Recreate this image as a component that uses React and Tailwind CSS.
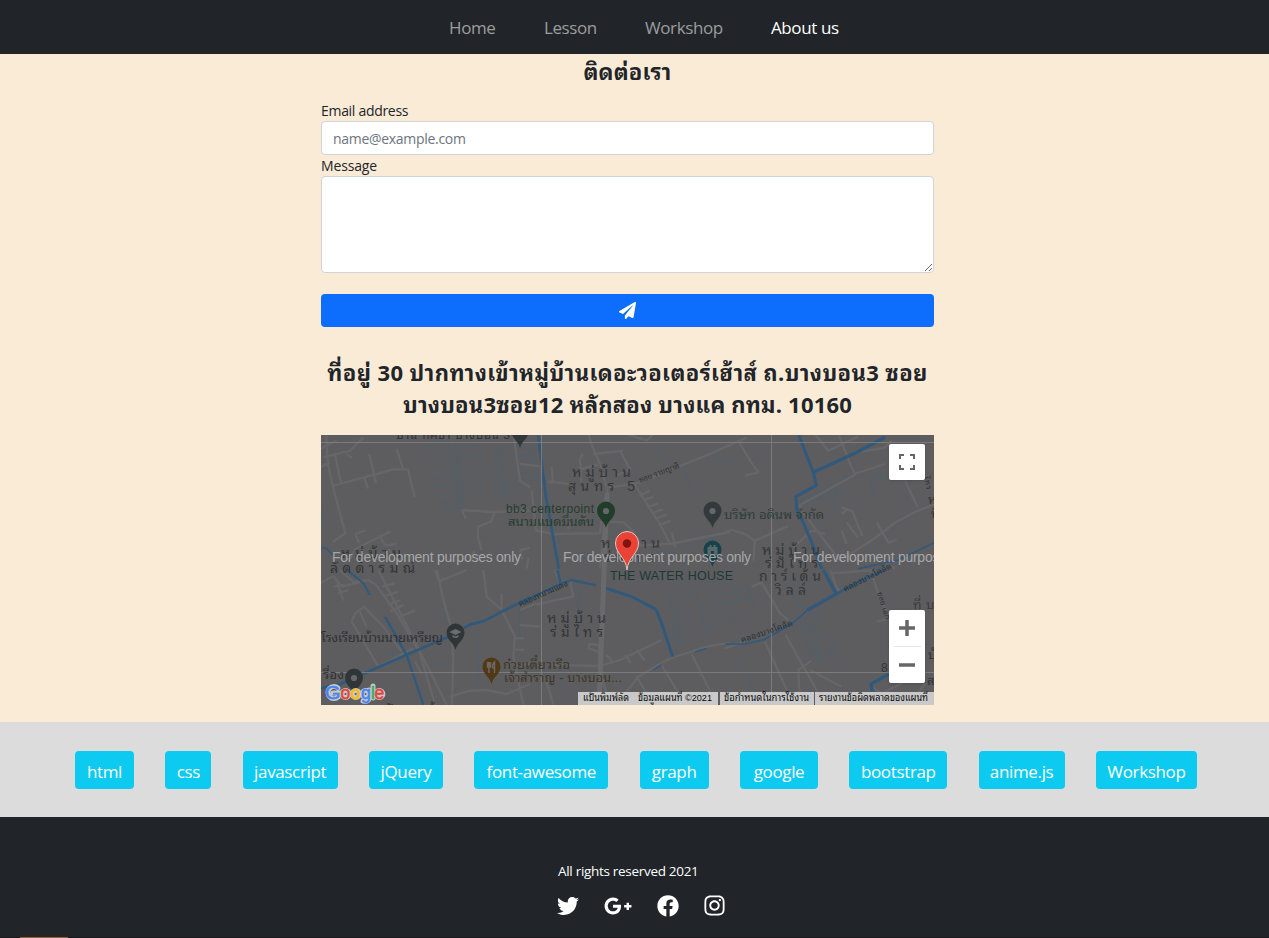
import { FaPaperPlane, FaTwitter, FaGooglePlusG, FaFacebook, FaInstagram } from "react-icons/fa";

const nav = [
  ["Home", "w-[46px] text-[#9b9d9e]"],
  ["Lesson", "w-[52px] text-[#9b9d9e]"],
  ["Workshop", "w-[77px] text-[#9b9d9e]"],
  ["About us", "w-[69px] text-white"],
];

const tags = [
  ["html", "w-[59px]"],
  ["css", "w-[46px]"],
  ["javascript", "w-[95px]"],
  ["jQuery", "w-[74px]"],
  ["font-awesome", "w-[134px]"],
  ["graph", "w-[69px]"],
  ["google", "w-[78px]"],
  ["bootstrap", "w-[98px]"],
  ["anime.js", "w-[86px]"],
  ["Workshop", "w-[101px]"],
];

/* Each tile is drawn in its own 3x coordinate space. */
const tiles = [
  {
    at: "translate(-1 -1) scale(.33333)",
    roads: [
      "M18 0 L24 90 L10 92 M24 90 L38 156 L76 298 L38 324 M38 156 L220 106 L264 106 L284 190 M44 60 L64 150 M148 60 L168 148 M132 130 L144 164 M230 44 L248 102",
      "M10 70 L90 50 L130 10 M0 100 L30 85 M80 60 L96 72 M90 375 L105 345 L210 293 M105 300 L118 328 M105 300 L135 290 M178 303 L195 335 M195 335 L230 330 M205 345 L240 385 M0 45 L50 20",
      "M425 228 L520 234 L630 230 M425 228 L438 254 M524 234 L514 262 L474 278 L474 310 L484 348 M600 348 L630 342 M600 348 L607 376 M455 376 L462 350 M580 0 L600 140 L630 160",
    ],
    canals: [
      "M318 34 L380 28 M326 62 L386 52 M325 84 L392 75 M330 110 L396 98 M334 136 L402 122 M334 160 L402 145 M345 185 L410 170 M350 210 L415 196 M350 236 L424 224",
      "M408 44 L480 34 M414 72 L496 58 M414 102 L490 84 M414 130 L488 110 M418 158 L492 140 M422 186 L494 164 M386 20 L424 220 M404 24 L430 222",
      "M545 30 L550 54 L540 62 L562 198 M512 50 L548 46 M510 75 L548 72 M515 96 L552 92 M518 120 L555 116 M521 145 L558 138 M523 168 L560 162 M523 190 L585 182 M560 40 L630 42 M565 70 L630 60 M570 100 L630 90 M570 125 L620 117 M585 150 L560 155",
      "M72 150 L76 164 M5 230 L10 258 M480 234 L482 248",
    ],
    water: [["M0 342 L18 342 L48 372", 4]],
  },
  {
    at: "translate(199 -1) scale(.33333)",
    roads: [
      "M0 90 L70 98 M205 0 L218 40 L240 90 L262 170 L240 404",
      "M262 160 L330 152 L360 146 L500 88 L575 58 L630 32 M95 98 L98 140 L88 150 M82 142 L150 150 M188 60 L180 75 L184 145 M184 105 L235 92 M320 0 L380 20 L400 0 M220 60 L310 50 M300 50 L330 105 L290 125 M35 170 L48 290 L100 300 L240 298 L244 262 L310 265 L338 290 L360 330",
      "M336 140 L420 270 L450 330 M360 185 L390 170 M370 200 L400 188 M382 220 L415 208 M394 238 L430 225 M405 255 L440 242 M416 275 L452 260 M340 335 L450 330 L630 294 M455 295 L466 340 M25 370 L20 404 M145 230 L145 285",
    ],
    canals: [
      "M0 40 L45 44 M0 70 L40 66 M5 95 L50 85 M5 115 L50 108 M5 140 L54 132 M28 0 L62 210 M72 160 L100 210 L80 215 M100 300 L105 360 M118 306 L112 404 M488 90 L510 164 M410 35 L440 85 M578 60 L592 92 L630 76 M285 70 L305 98 M390 360 L480 350 L610 300 M160 370 L190 355 L205 390",
    ],
    water: [["M54 0 L78 190 L116 404", 8]],
  },
  {
    at: "translate(404 -1) scale(.33333)",
    roads: [
      "M0 40 L65 10 M40 20 L75 80 L100 115 L60 125 M0 294 L20 288 L60 300 L90 320 L190 276 M90 320 L85 380 M270 0 L310 50 L400 8 M342 5 L372 80 L390 122 L224 214 L230 230 L345 380 L450 312 L510 266 L570 234 L630 210 M372 66 L404 53 L478 42 L500 20",
      "M350 220 L382 232 L412 306 M350 240 L365 228 M350 290 L365 330 M365 265 L398 310 M455 265 L490 326 L515 318 M388 120 L480 90 M540 140 L578 220 M455 370 L510 404 M205 340 L260 290 L300 300",
    ],
    canals: [
      "M80 35 L95 65 M220 204 L310 158 L385 120 M226 216 L335 165 M310 185 L335 230 L360 220 M328 170 L350 206 M320 190 L355 170 L380 200 M430 140 L445 178 L470 120 L440 130 L430 110 M455 105 L480 140 M525 190 L570 170 M550 235 L580 200 M520 275 L525 250 M250 275 L280 260 L292 290 L265 300 Z M430 345 L445 375 M465 310 L475 340",
    ],
    water: [
      ["M220 0 L265 115 L274 154 L212 188 L216 226", 9],
      ["M265 115 L390 58 L480 10", 10],
      ["M216 226 L234 264 L262 330 L290 404", 9],
      ["M400 404 L520 378 L630 325", 5],
    ],
  },
  {
    at: "translate(-1 135) scale(.33333)",
    roads: [
      "M0 40 L40 18 L66 50 L145 30 L168 45 L230 130 L300 250 L345 404 M60 0 L100 35 L150 30 M52 40 L70 92 M40 50 L75 45 M55 70 L85 60 M175 0 L290 225 L380 404 M185 50 L225 40 M195 78 L235 65 M205 104 L242 90 M210 125 L250 105 M240 140 L285 122",
      "M350 0 L358 34 L440 0 M345 0 L358 34 L370 90 L390 160 L400 260 L396 404 M95 155 L105 130 L132 110 L190 170 L245 245 M95 155 L175 290 L280 235 M120 125 L140 170 M490 0 L500 80 L545 120 L545 72 M545 120 L585 200 L580 260 L610 404 M390 380 L450 362 L500 360 L560 372 L630 342 M285 275 L305 312 M580 205 L612 205 M580 238 L612 240 M590 290 L630 280",
    ],
    canals: [
      "M368 100 L380 118 M375 110 L385 165 M476 165 L474 345 M345 275 L355 290 L385 280 M600 110 L600 200 M195 250 L240 260 M555 60 L545 80",
    ],
    water: [
      ["M82 0 L130 40 L150 75", 6],
      ["M195 140 L260 255 L310 404", 7],
      ["M0 356 L60 342 L175 292 L260 254 L375 205 L450 164 L490 154 L540 128 L630 82", 8],
    ],
  },
  {
    at: "translate(199 135) scale(.33333)",
    roads: [
      "M50 104 L110 90 L160 80 L150 30 M105 0 L120 40 M0 120 L50 100 M210 222 L240 225 L235 245 L205 235 Z M95 285 L240 288 L300 270 L425 210 M260 254 L280 280 M316 254 L332 280 M350 240 L375 272 M290 404 L355 320 L430 275 L460 262 L560 230 L630 218 M245 322 L270 404 M350 318 L398 404 M425 285 L485 385 M515 252 L590 404 M75 320 L100 404 M0 165 L60 170",
    ],
    canals: [
      "M450 85 L475 242 M450 92 L520 70 L570 50 L630 32 M460 118 L500 104 M460 142 L510 128 M465 165 L515 150 M462 190 L512 175 M444 186 L480 178 M445 208 L485 198 M478 220 L520 205 M530 70 L560 200 M545 92 L615 70 M548 120 L620 98 M552 145 L625 125 M556 170 L630 155 M475 45 L510 35 M155 40 L180 140 M180 40 L180 120 M110 300 L160 290 M125 310 L140 380 M60 270 L80 340 M315 40 L318 62",
    ],
    water: [
      ["M0 102 L55 72 L120 42 L155 30 L228 46", 7],
      ["M112 0 L122 42", 8],
      ["M244 50 L335 80 L408 118", 9],
      ["M408 118 L425 160 L458 260", 9],
      ["M400 300 L425 284 M525 246 L560 235", 4],
    ],
  },
  {
    at: "translate(404 135) scale(.33333)",
    roads: [
      "M80 50 L110 38 L135 80 L165 130 L190 150 M315 0 L335 52 L345 65 M320 10 L450 0 M435 0 L450 40 L465 90 L490 130 L480 150 L455 155 M120 215 L205 404 M182 195 L235 290 L300 404 M225 404 L220 300 L260 272 M255 300 L350 350 M0 235 L70 210 M440 350 L470 370 L540 335 M560 400 L600 340",
    ],
    canals: [
      "M190 60 L250 130 L290 275 M200 70 L240 55 M215 95 L245 80 M225 150 L285 130 M232 175 L290 155 M240 195 L305 178 M245 220 L310 200 M260 250 L325 230 L350 270 M225 145 L260 270 M260 270 L325 250 M0 70 L50 60 M0 100 L75 80 M0 130 L35 120 M0 155 L45 140 M40 258 L85 360 M65 40 L85 105 L75 120 M560 230 L600 190",
    ],
    water: [
      ["M295 0 L334 72 L248 120", 10],
      ["M334 72 L400 35 L480 0", 7],
      ["M248 120 L205 158 L120 208 L60 222 L0 222", 5],
      ["M442 365 L438 342 L495 310", 10],
    ],
  },
];

/* text, x, baseline, length, size, colour, rotation */
const labels = [
  ["บ้าน ทิศธา บางบอน 3", 75, 4, 114, 12, "#303436", 0],
  ["หมู่บ้าน", 251, 42, 59, 14.5, "#353738", 0],
  ["สุนทร 5", 247, 56, 67, 14, "#353738", 0],
  ["ซอย รามญาติ", 319, 48, 43, 8, "#343434", -21],
  ["bb3 centerpoint", 185, 78, 88, 12, "#263c2e", 0],
  ["สนามแบดมินตัน", 187, 91, 86, 13, "#263c2e", 0],
  ["หมู่บ้าน", 280, 113, 59, 14.5, "#353738", 0],
  ["ร่มไทร", 283, 127, 52, 14, "#353738", 0],
  ["บริษัท อดินพ จำกัด", 403, 84, 100, 13, "#2f3e38", 0],
  ["หมู่บ้าน", 441, 120, 58, 14.5, "#353738", 0],
  ["ร่มไทร", 444, 133, 53, 14, "#353738", 0],
  ["การ์เด้น", 438, 146, 62, 14, "#353738", 0],
  ["วิลล์", 454, 160, 31, 14, "#353738", 0],
  ["หมู่บ้าน", 20, 123, 60, 14.5, "#333536", 0],
  ["ลัดดารมณ์", 9, 138, 85, 14, "#333536", 0],
  ["THE WATER HOUSE", 289, 145, 123, 12.5, "#1c3936", 0],
  ["คลองหนามแดง", 199, 172, 53, 8.5, "#26333d", -24],
  ["คลองบางโคลัด", 421, 208, 54, 8.5, "#29343c", -19],
  ["คลองบางโคลัด", 524, 157, 53, 8.5, "#29343c", -27],
  ["โรงเรียนบ้านนายเหรียญ", 0, 207, 122, 13, "#2d3033", 0],
  ["หมู่บ้าน", 226, 188, 59, 14.5, "#333536", 0],
  ["ร่มไทร", 229, 202, 53, 14, "#333536", 0],
  ["ก๋วยเตี๋ยวเรือ", 182, 234, 67, 13, "#3f3527", 0],
  ["เจ้าสำราญ - บางบอน...", 183, 247, 118, 12.5, "#3f3527", 0],
  ["รื่อง", 2, 244, 21, 13, "#2d3033", 0],
  ["ซอย เอก", 556, 158, 28, 7.5, "#303030", 72],
  ["ที่ บางบอน", 592, 174, 60, 13, "#3a3c3d", 0],
  ["หมู่บ้าน", 607, 69, 50, 13, "#333536", 0],
  ["ทิพย์", 610, 83, 45, 13, "#333536", 0],
  ["ไทร", 603, 42, 13, 7.5, "#303030", 78],
  ["8", 560, 237, 8, 12, "#303436", 0],
  ["บ้าน", 607, 224, 40, 13, "#303436", 0],
  ["สวน", 606, 250, 32, 13, "#303436", 0],
  ["ปังบ้าน", 65, 278, 90, 12, "#303436", 0],
];

const logo = [
  ["G", 4, 15.5, "#4285f4"],
  ["o", 19.5, 9.8, "#ea4335"],
  ["o", 29.8, 9.8, "#fbbc05"],
  ["g", 40, 9.8, "#4285f4"],
  ["l", 50, 3.8, "#34a853"],
  ["e", 53.5, 9.8, "#ea4335"],
];

function Pin({ x, y, color, children }) {
  return (
    <g transform={`translate(${x} ${y})`}>
      <path d="M0 17 C-1.5 10-9 7-9-.5 A9 9 0 0 1 9-.5 C9 7 1.5 10 0 17Z" fill={color} />
      {children || <circle r="3.1" fill="#666768" />}
    </g>
  );
}

function MapDrawing() {
  return (
    <svg width="613" height="270" viewBox="0 0 613 270" className="block" fontFamily="'Liberation Sans', 'Noto Sans Thai Looped', 'Leelawadee UI', Tahoma, Loma, Waree, Garuda, sans-serif">
      <rect width="613" height="270" fill="#5d5d5f" />
      {tiles.map((t, i) => (
        <g key={i} transform={t.at} fill="none" strokeLinejoin="round">
          {t.canals.map((d) => <path key={d} d={d} stroke="#535f69" strokeWidth="4.5" />)}
          {t.roads.map((d) => <path key={d} d={d} stroke="#666668" strokeWidth="7" />)}
          {t.water.map(([d, w]) => <path key={d} d={d} stroke="#30597c" strokeWidth={w} />)}
        </g>
      ))}
      <path d="M286 58 L278 270" stroke="#69696b" strokeWidth="5" />
      <path d="M0 7.5H613M0 237.5H613M220.5 0V270M450.5 0V270" stroke="#7b7b7c" strokeWidth="1" />
      {labels.map(([s, x, y, w, size, fill, r], i) => (
        <text key={i} x={x} y={y} textLength={w} fontSize={size} fill={fill} transform={`rotate(${r} ${x} ${y})`}>{s}</text>
      ))}
      <Pin x={199} y={-4} color="#30383a" />
      <Pin x={285} y={76} color="#203d29" />
      <Pin x={391.5} y={76} color="#323a3c" />
      <Pin x={391.5} y={115} color="#17424a">
        <path d="M-5 5V-3H-3V-5H-1V-3H1V-5H3V-3H5V5H1.5V1H-1.5V5Z" fill="#59686b" />
      </Pin>
      <Pin x={134.5} y={198} color="#303638">
        <path d="M-6-1L0-4L6-1L0 2ZM-3 2V4Q0 6 3 4V2L0 3.5Z" fill="#6b6d6e" />
      </Pin>
      <Pin x={170.5} y={232} color="#513915">
        <path d="M-4-5V0H-1V-5M-2.5-5V6M3 6V-5Q0-2 1.5 1H3" fill="none" stroke="#6b6763" strokeWidth="1.5" />
      </Pin>
      <Pin x={33} y={243} color="#303638" />
      <g fontSize="14" fill="#a7a7a8">
        <text x="11" y="127" textLength="189">For development purposes only</text>
        <text x="242" y="127" textLength="188">For development purposes only</text>
        <text x="472" y="127" textLength="189">For development purposes only</text>
      </g>
      <path d="M306 135 C305 122 294.500 119 294.500 108 A11.500 11.500 0 0 1 317.500 108 C317.500 119 307 122 306 135Z" fill="#ea4335" stroke="#d9c9c6" strokeWidth="1" />
      <circle cx="306" cy="108.500" r="4.200" fill="#811411" />
      <g fill="none" stroke="#c5c8cc" strokeWidth="5" strokeLinecap="round">
        <path d="M17 253 A6 6 0 1 0 17 262 V258H12" />
        <circle cx="24.500" cy="259" r="3.600" />
        <circle cx="34.700" cy="259" r="3.600" />
        <path d="M48 255V264Q47 267 42 266" />
        <circle cx="44.700" cy="259" r="3.600" />
        <path d="M52 251V263" />
        <circle cx="58.300" cy="259" r="3.600" />
      </g>
      <g fontSize="18" fontFamily="'Liberation Sans', sans-serif">
        {logo.map(([c, x, w, fill], i) => (
          <text key={i} x={x} y="264" textLength={w} lengthAdjust="spacingAndGlyphs" fill={fill} stroke={fill} strokeWidth=".5">{c}</text>
        ))}
      </g>
      <path d="M257 257H397V270H257ZM399 257H493V270H399ZM494 257H613V270H494Z" fill="#c9c9c9" />
      <g fontSize="9.500" fill="#080808">
        <text x="262" y="266" textLength="46" lengthAdjust="spacingAndGlyphs">แป้นพิมพ์ลัด</text>
        <text x="317" y="266" textLength="74" lengthAdjust="spacingAndGlyphs">ข้อมูลแผนที่ ©2021</text>
        <text x="403" y="266" textLength="85" lengthAdjust="spacingAndGlyphs">ข้อกำหนดในการใช้งาน</text>
        <text x="498" y="266" textLength="109" lengthAdjust="spacingAndGlyphs">รายงานข้อผิดพลาดของแผนที่</text>
      </g>
    </svg>
  );
}

export default function App() {
  return (
    <div className="flex h-[938px] w-[1269px] flex-col overflow-hidden bg-[#faebd7] font-['Open_Sans','Noto_Sans_Thai_Looped','Leelawadee_UI',Tahoma,Loma,Waree,Garuda,sans-serif] text-[#212529]">
      <nav className="flex h-[54px] shrink-0 justify-center gap-[49px] bg-[#212529] pl-5 pt-4 text-[17px] leading-6 tracking-[-0.4px]">
        {nav.map(([label, cls]) => (
          <a key={label} className={`${cls} whitespace-nowrap`}>{label}</a>
        ))}
      </nav>

      <main className="ml-[321px] flex h-[668px] w-[613px] shrink-0 flex-col">
        <h2 className="flex h-[47px] items-start justify-center pt-[3px] text-[22px] font-bold leading-7 tracking-[0.2px]">ติดต่อเรา</h2>
        <label className="h-5 text-[14px] leading-[19px] tracking-[-0.3px]">Email address</label>
        <input placeholder="name@example.com" className="h-[34px] rounded-[4px] border border-[#ced4da] bg-white px-[11px] pt-px text-[14px] tracking-[-0.3px] placeholder:text-[#6c757d]" />
        <label className="h-[21px] text-[14px] leading-[22px] tracking-[-0.15px]">Message</label>
        <textarea className="h-[97px] resize-y rounded-[4px] border border-[#ced4da] bg-white" />
        <button className="mt-[21px] flex h-[33px] items-center justify-center rounded-[4px] bg-[#0d6efd] text-white">
          <FaPaperPlane size={17} />
        </button>
        <h2 className="mt-[29px] h-[79px] whitespace-nowrap text-center text-[22px] font-bold leading-8 tracking-[0.4px]">
          ที่อยู่ 30 ปากทางเข้าหมู่บ้านเดอะวอเตอร์เฮ้าส์ ถ.บางบอน3 ซอย<br />
          <span className="tracking-[0.2px]">บางบอน3ซอย12 หลักสอง บางแค กทม. 10160</span>
        </h2>
        <section className="relative h-[270px] shrink-0 overflow-hidden">
          <MapDrawing />
          <button className="absolute right-[9px] top-[9px] flex h-9 w-9 items-center justify-center rounded-[2px] bg-white shadow-sm">
            <svg width="18" height="18" viewBox="0 0 18 18" fill="none" stroke="#666" strokeWidth="2">
              <path d="M2 6V2H6M12 2H16V6M16 12V16H12M6 16H2V12" />
            </svg>
          </button>
          <div className="absolute bottom-[22px] right-[9px] flex h-[73px] w-9 flex-col items-center rounded-[2px] bg-white shadow-sm">
            <svg width="36" height="73" viewBox="0 0 36 73" fill="none" stroke="#666" strokeWidth="3.5">
              <path d="M10 18H26M18 10V26M10 55H26" />
              <path d="M5 36.500H32" stroke="#e6e6e6" strokeWidth="1" />
            </svg>
          </div>
        </section>
      </main>

      <section className="flex h-[95px] shrink-0 items-center justify-between bg-[#dcdcdc] pl-[75px] pr-[72px]">
        {tags.map(([label, cls]) => (
          <a key={label} className={`${cls} flex h-[38px] items-center justify-center whitespace-nowrap rounded-[4px] bg-[#0dcaf0] pt-1 text-[17px] tracking-[-0.35px] text-white`}>{label}</a>
        ))}
      </section>

      <footer className="flex h-[120px] shrink-0 flex-col bg-[#212529] pl-[557px] text-white">
        <p className="mt-[43px] h-[34px] whitespace-nowrap pl-px text-[13.5px] leading-[22px] tracking-[-0.3px]">All rights reserved 2021</p>
        <div className="flex h-[23px] items-center">
          <FaTwitter size={22} />
          <FaGooglePlusG size={28} className="ml-[25px]" />
          <FaFacebook size={22} className="ml-[25px]" />
          <FaInstagram size={23} className="ml-[24px]" />
        </div>
      </footer>
      <div className="h-px shrink-0 bg-[#18191c] pl-5">
        <div className="h-px w-12 bg-[#9b6032]" />
      </div>
    </div>
  );
}
